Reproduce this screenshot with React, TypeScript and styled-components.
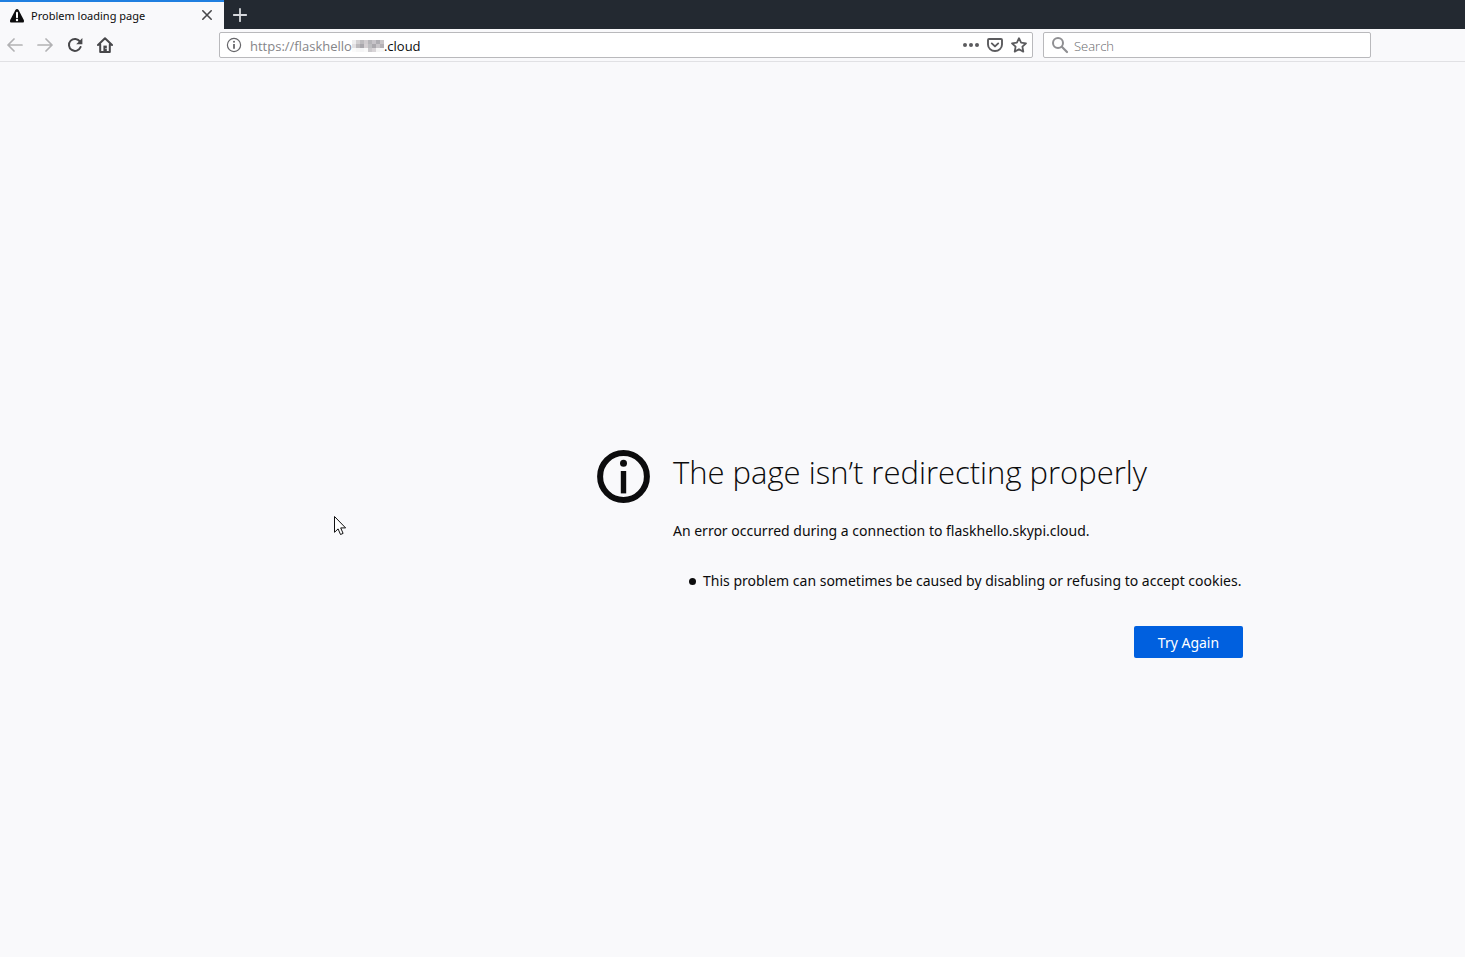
import React from "react";
import styled, { createGlobalStyle } from "styled-components";

const GlobalStyle = createGlobalStyle`
  * { box-sizing: border-box; }
  body {
    margin: 0;
    background: #f9f9fb;
    color: #0c0c0d;
    font-family: "Noto Sans", "Open Sans", sans-serif;
  }
  button, input { font: inherit; }
`;

const Window = styled.div`
  display: flex;
  flex-direction: column;
  min-height: 100vh;
`;

const TabStrip = styled.div`
  display: flex;
  align-items: center;
  height: 29px;
  background: #232931;
`;

const Tab = styled.div`
  display: flex;
  align-items: center;
  width: 224px;
  height: 100%;
  padding: 0 8px 0 9px;
  border-top: 2px solid #1f7fe0;
  background: #f9f9fb;
`;

const TabTitle = styled.span`
  flex: 1;
  margin-left: 6px;
  font-size: 11px;
  line-height: 16px;
  white-space: nowrap;
`;

const IconButton = styled.button<{ $size?: number; $color?: string }>`
  display: flex;
  flex: none;
  align-items: center;
  justify-content: center;
  width: ${({ $size = 24 }) => $size}px;
  height: 24px;
  padding: 0;
  border: 0;
  background: transparent;
  color: ${({ $color = "#47474a" }) => $color};
`;

const Toolbar = styled.div`
  display: flex;
  align-items: center;
  height: 33px;
  border-bottom: 1px solid #e1e1e4;
  background: #f9f9fb;
`;

const NavButtons = styled.nav`
  display: flex;
  flex: none;
  width: 219px;
`;

const Field = styled.div`
  display: flex;
  align-items: center;
  height: 26px;
  border: 1px solid #b9b9bc;
  border-radius: 2px;
  background: #fff;
`;

const AddressField = styled(Field)`
  flex: 809;
  padding: 0 1px 0 2px;
`;

const SearchField = styled(Field)`
  flex: 318;
  gap: 2px;
  margin: 0 94px 0 10px;
  padding: 0 4px;
`;

const TextInput = styled.input<{ $color: string; $fit?: boolean }>`
  flex: ${({ $fit }) => ($fit ? "none" : "1")};
  field-sizing: ${({ $fit }) => ($fit ? "content" : "fixed")};
  min-width: 0;
  height: 24px;
  padding: 2px 0 0;
  border: 0;
  outline: 0;
  background: transparent;
  color: ${({ $color }) => $color};
  font-family: "Open Sans", "Noto Sans", sans-serif;
  font-size: 13px;
  &::placeholder { color: #68686b; font-weight: 300; opacity: 1; }
`;

const UrlText = styled.div`
  display: flex;
  flex: 1;
  align-items: center;
  min-width: 0;
  margin-left: 4px;
`;

const ErrorArea = styled.main`
  display: flex;
  align-items: flex-start;
  gap: 23px;
  padding: 388px 0 0 40.75%;
`;

const Message = styled.section`
  width: 570px;
`;

const Title = styled.h1`
  margin: 0;
  font-family: "Open Sans", "Noto Sans", sans-serif;
  font-size: 31px;
  font-weight: 300;
  line-height: 44px;
`;

const Description = styled.p`
  margin: 26px 0 0;
  font-size: 14px;
  line-height: 22px;
  white-space: nowrap;
`;

const Reasons = styled.ul`
  margin: 28px 0 0;
  padding: 0 0 0 16px;
  list-style: none;
`;

const Reason = styled.li`
  display: flex;
  align-items: center;
  gap: 7px;
  font-size: 14px;
  line-height: 22px;
  white-space: nowrap;
  &::before {
    content: "";
    width: 7px;
    height: 7px;
    border-radius: 50%;
    background: #0c0c0d;
  }
`;

const RetryButton = styled.button`
  display: block;
  width: 109px;
  height: 32px;
  margin: 34px 0 0 auto;
  padding: 0;
  border: 0;
  border-radius: 2px;
  background: #0060df;
  color: #fff;
  font-size: 14px;
`;

const Cursor = styled.svg`
  position: absolute;
  left: 333px;
  top: 515px;
`;

const stroke = {
  fill: "none",
  stroke: "currentColor",
  strokeWidth: 2,
  strokeLinecap: "round" as const,
  strokeLinejoin: "round" as const,
};

const WarningIcon = () => (
  <svg width="16" height="16" viewBox="0 0 16 16" aria-hidden="true">
    <path d="M6.4 2 Q8 0 9.6 2 L14.8 12 Q15.6 14.5 13.4 14.6 H2.6 Q.4 14.5 1.2 12 Z" fill="#0c0c0d" />
    <path d="M8 4.8v4.4" stroke="#fff" strokeWidth="2" strokeLinecap="round" />
    <circle cx="8" cy="12" r="1.2" fill="#fff" />
  </svg>
);

const CloseIcon = () => (
  <svg width="16" height="16" viewBox="0 0 16 16" aria-hidden="true">
    <path d="M3.8 2.8l8.4 8.4M12.2 2.8l-8.4 8.4" {...stroke} strokeWidth={1.6} />
  </svg>
);

const PlusIcon = () => (
  <svg width="16" height="16" viewBox="0 0 16 16" aria-hidden="true">
    <path d="M8 1.8v12.4M1.8 8h12.4" {...stroke} strokeWidth={1.8} />
  </svg>
);

const ArrowIcon = ({ forward = false }: { forward?: boolean }) => (
  <svg width="16" height="16" viewBox="0 0 16 16" aria-hidden="true">
    <path
      d={forward ? "M1 8h14M9 2l6 6-6 6" : "M15 8H1M7 2L1 8l6 6"}
      {...stroke}
      strokeWidth={1.7}
    />
  </svg>
);

const ReloadIcon = () => (
  <svg width="16" height="16" viewBox="0 0 16 16" aria-hidden="true">
    <path d="M13 4.6A6 6 0 1 0 13.6 10" {...stroke} />
    <path d="M15.4 1v6.2H9.2Z" fill="currentColor" />
  </svg>
);

const HomeIcon = () => (
  <svg width="16" height="16" viewBox="0 0 16 16" aria-hidden="true">
    <path d="M1 8l7-6.8L15 8M3.2 7.4V15h9.6V7.4" {...stroke} />
    <path d="M6.4 15V8.6h3.4V15" fill="currentColor" />
    <path d="M9 11v1" stroke="#f9f9fb" strokeWidth="1" />
  </svg>
);

const SmallInfoIcon = () => (
  <svg width="16" height="16" viewBox="0 0 16 16" aria-hidden="true">
    <circle cx="8" cy="8" r="6.6" fill="none" stroke="currentColor" strokeWidth="1.2" />
    <circle cx="8" cy="4.7" r="1" fill="currentColor" />
    <path d="M8 7v4.8" stroke="currentColor" strokeWidth="1.8" />
  </svg>
);

const DotsIcon = () => (
  <svg width="16" height="16" viewBox="0 0 16 16" fill="currentColor" aria-hidden="true">
    <circle cx="2" cy="8" r="2" />
    <circle cx="8" cy="8" r="2" />
    <circle cx="14" cy="8" r="2" />
  </svg>
);

const PocketIcon = () => (
  <svg width="16" height="16" viewBox="0 0 16 16" aria-hidden="true">
    <path d="M2 2h12q1 0 1 1v4.4a7 6.6 0 0 1-14 0V3q0-1 1-1Z" {...stroke} strokeWidth={1.9} />
    <path d="M4.8 6.4L8 9.4l3.2-3" {...stroke} strokeWidth={1.9} />
  </svg>
);

const StarIcon = () => (
  <svg width="16" height="16" viewBox="0 0 16 16" aria-hidden="true">
    <path
      d="M8 1.2l2.1 4.5 4.9.6-3.6 3.4.9 4.9L8 12.2l-4.3 2.4.9-4.9L1 6.3l4.9-.6Z"
      {...stroke}
      strokeWidth={1.8}
    />
  </svg>
);

const SearchIcon = () => (
  <svg width="18" height="18" viewBox="0 0 18 18" aria-hidden="true">
    <circle cx="7" cy="7" r="5" {...stroke} />
    <path d="M10.8 10.8L16 16" {...stroke} strokeWidth={2.2} />
  </svg>
);

const InfoIcon = () => (
  <svg width="53" height="53" viewBox="0 0 53 53" aria-hidden="true">
    <circle cx="26.5" cy="26.5" r="23.4" fill="none" stroke="#0c0c0d" strokeWidth="6" />
    <circle cx="26.5" cy="13.2" r="3.5" fill="#0c0c0d" />
    <path d="M26.5 21v22.4" stroke="#0c0c0d" strokeWidth="5.4" />
  </svg>
);

const mosaic = [
  "#eeeeef", "#d2d0d2", "#bdbbbe", "#d0cccf", "#b5b4b8", "#c6c3c8", "#aeadb2", "#c9c5c7",
  "#e2e0e2", "#bcbabd", "#a9a7ac", "#d4cfd2", "#bdbdc0", "#aaa8ad", "#c7c4c8", "#b5b1b5",
  "#fafafa", "#f6f6f6", "#f4f4f5", "#f9f9f9", "#cbc9cc", "#d8d4d7", "#f5f5f5", "#f8f8f8",
];

const Mosaic = () => (
  <svg width="32" height="13" viewBox="0 0 32 13" role="img" aria-label="Hidden part of the address">
    {mosaic.map((fill, i) => (
      <rect key={i} x={(i % 8) * 4} y={Math.floor(i / 8) * 4 + 1} width="4" height="4" fill={fill} />
    ))}
  </svg>
);

export default function App() {
  return (
    <Window>
      <GlobalStyle />
      <TabStrip>
        <Tab>
          <WarningIcon />
          <TabTitle>Problem loading page</TabTitle>
          <IconButton $size={18} aria-label="Close tab"><CloseIcon /></IconButton>
        </Tab>
        <IconButton $size={32} $color="#d6d8dc" aria-label="New tab"><PlusIcon /></IconButton>
      </TabStrip>
      <Toolbar>
        <NavButtons aria-label="Navigation">
          <IconButton $size={30} $color="#b2b2b4" aria-label="Back"><ArrowIcon /></IconButton>
          <IconButton $size={30} $color="#b2b2b4" aria-label="Forward"><ArrowIcon forward /></IconButton>
          <IconButton $size={30} aria-label="Reload"><ReloadIcon /></IconButton>
          <IconButton $size={30} aria-label="Home"><HomeIcon /></IconButton>
        </NavButtons>
        <AddressField>
          <IconButton $color="#66666a" aria-label="Site information"><SmallInfoIcon /></IconButton>
          <UrlText>
            <TextInput $color="#858588" $fit aria-label="Address" defaultValue="https://flaskhello" />
            <Mosaic />
            <TextInput $color="#0c0c0d" aria-label="Address domain" defaultValue=".cloud" />
          </UrlText>
          <IconButton $color="#5b5b5e" aria-label="Page actions"><DotsIcon /></IconButton>
          <IconButton $color="#5b5b5e" aria-label="Save to Pocket"><PocketIcon /></IconButton>
          <IconButton $color="#5b5b5e" aria-label="Bookmark this page"><StarIcon /></IconButton>
        </AddressField>
        <SearchField>
          <IconButton $color="#8f8f92" aria-label="Run search"><SearchIcon /></IconButton>
          <TextInput $color="#0c0c0d" aria-label="Search" placeholder="Search" />
        </SearchField>
      </Toolbar>
      <ErrorArea>
        <InfoIcon />
        <Message>
          <Title>The page isn’t redirecting properly</Title>
          <Description>An error occurred during a connection to flaskhello.skypi.cloud.</Description>
          <Reasons>
            <Reason>This problem can sometimes be caused by disabling or refusing to accept cookies.</Reason>
          </Reasons>
          <RetryButton>Try Again</RetryButton>
        </Message>
      </ErrorArea>
      <Cursor width="14" height="22" viewBox="0 0 14 22" aria-hidden="true">
        <path d="M1.5 1.5v15.8l3.6-3.4 2.4 5.6 2.6-1.1-2.4-5.5h4.9Z" fill="#fff" stroke="#111" strokeWidth="1" />
      </Cursor>
    </Window>
  );
}
